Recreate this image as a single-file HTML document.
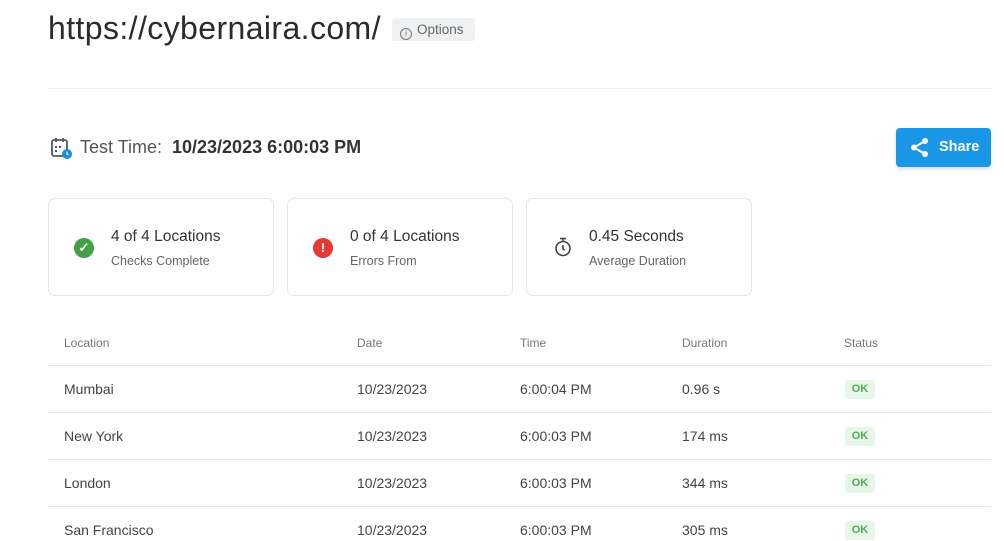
<!DOCTYPE html>
<html><head><meta charset="utf-8"><style>
body{margin:0;width:1004px;height:541px;overflow:hidden;background:#fff;font-family:"Liberation Sans",Arial,sans-serif;color:#333;position:relative}
.a{position:absolute;white-space:nowrap}
.card{position:absolute;top:198px;width:226px;height:98px;border:1px solid #e6e6e6;border-radius:7px;box-sizing:border-box}
.card .t{position:absolute;left:62px;top:29px;font-size:15.5px;color:#333}
.card .s{position:absolute;left:62px;top:55px;font-size:12.5px;color:#666}
.card .ic{position:absolute;left:25px;top:39px;width:20px;height:20px;border-radius:50%;color:#fff;font-size:13px;font-weight:bold;text-align:center;line-height:20px}
.hr{position:absolute;left:48px;width:943px;height:1px;background:#e8e8e8}
.th{position:absolute;top:336px;font-size:12px;color:#777}
.td{position:absolute;font-size:14px;color:#444}
.ok{position:absolute;left:845px;width:30px;height:19px;background:#e8f5e9;color:#4caf50;font-size:11px;font-weight:bold;text-align:center;line-height:19px;border-radius:3px}
</style></head><body>
<div class="a" style="left:48px;top:10px;font-size:32px;color:#2b2b2b;letter-spacing:0.4px">https://cybernaira.com/</div>
<div class="a" style="left:392px;top:18px;width:83px;height:23px;background:#eef0f2;border-radius:3px;font-size:13.5px;color:#666;line-height:23px"><span style="display:inline-block;box-sizing:border-box;width:12px;height:12px;border:1.3px solid #777;border-radius:50%;margin:0 5px 0 8px;vertical-align:-2px;font-size:8px;line-height:10px;text-align:center">i</span>Options</div>
<div class="hr" style="top:88px;background:#eee"></div>
<svg class="a" style="left:51px;top:137px" width="22" height="22" viewBox="0 0 22 22"><rect x="1" y="3" width="15" height="16" rx="2" fill="none" stroke="#556" stroke-width="1.8"/><line x1="5" y1="1" x2="5" y2="5" stroke="#556" stroke-width="1.8"/><line x1="12" y1="1" x2="12" y2="5" stroke="#556" stroke-width="1.8"/><rect x="4" y="9" width="2" height="2" fill="#556"/><rect x="8" y="9" width="2" height="2" fill="#556"/><rect x="4" y="13" width="2" height="2" fill="#556"/><circle cx="16" cy="17" r="5" fill="#1e88e5"/><path d="M16 14.5v2.5l1.5 1" stroke="#fff" stroke-width="1.2" fill="none"/></svg>
<div class="a" style="left:80px;top:137px;font-size:18px;color:#555">Test Time:</div>
<div class="a" style="left:172px;top:137px;font-size:18px;font-weight:bold;color:#333">10/23/2023 6:00:03 PM</div>
<div class="a" style="left:896px;top:128px;width:95px;height:39px;background:#1a96e6;border-radius:4px;box-shadow:0 2px 3px rgba(0,0,0,.15);color:#fff;font-weight:bold;font-size:14.5px">
<svg style="position:absolute;left:14px;top:9px" width="20" height="21" viewBox="0 0 20 21"><circle cx="15" cy="4" r="3" fill="#fff"/><circle cx="4" cy="10.5" r="3" fill="#fff"/><circle cx="15" cy="17" r="3" fill="#fff"/><path d="M15 4L4 10.5L15 17" stroke="#fff" stroke-width="2" fill="none"/></svg><span style="position:absolute;left:43px;top:11px">Share</span></div>
<div class="card" style="left:48px"><div class="ic" style="background:#43a047">✓</div><div class="t">4 of 4 Locations</div><div class="s">Checks Complete</div></div>
<div class="card" style="left:287px"><div class="ic" style="background:#e53935">!</div><div class="t">0 of 4 Locations</div><div class="s">Errors From</div></div>
<div class="card" style="left:526px"><svg style="position:absolute;left:27px;top:38px" width="18" height="20" viewBox="0 0 18 20"><circle cx="9" cy="11.5" r="7" fill="none" stroke="#444" stroke-width="1.6"/><line x1="6" y1="1.5" x2="12" y2="1.5" stroke="#444" stroke-width="1.6"/><line x1="9" y1="2" x2="9" y2="4.5" stroke="#444" stroke-width="1.6"/><path d="M9 8v4l2 1" stroke="#444" stroke-width="1.6" fill="none"/></svg><div class="t">0.45 Seconds</div><div class="s">Average Duration</div></div>
<div class="th" style="left:64px">Location</div><div class="th" style="left:357px">Date</div><div class="th" style="left:520px">Time</div><div class="th" style="left:682px">Duration</div><div class="th" style="left:844px">Status</div>
<div class="hr" style="top:365px"></div>
<div class="td" style="left:64px;top:381px">Mumbai</div><div class="td" style="left:357px;top:381px">10/23/2023</div><div class="td" style="left:520px;top:381px">6:00:04 PM</div><div class="td" style="left:682px;top:381px">0.96 s</div><div class="ok" style="top:380px">OK</div>
<div class="hr" style="top:412px"></div>
<div class="td" style="left:64px;top:428px">New York</div><div class="td" style="left:357px;top:428px">10/23/2023</div><div class="td" style="left:520px;top:428px">6:00:03 PM</div><div class="td" style="left:682px;top:428px">174 ms</div><div class="ok" style="top:427px">OK</div>
<div class="hr" style="top:459px"></div>
<div class="td" style="left:64px;top:475px">London</div><div class="td" style="left:357px;top:475px">10/23/2023</div><div class="td" style="left:520px;top:475px">6:00:03 PM</div><div class="td" style="left:682px;top:475px">344 ms</div><div class="ok" style="top:474px">OK</div>
<div class="hr" style="top:506px"></div>
<div class="td" style="left:64px;top:522px">San Francisco</div><div class="td" style="left:357px;top:522px">10/23/2023</div><div class="td" style="left:520px;top:522px">6:00:03 PM</div><div class="td" style="left:682px;top:522px">305 ms</div><div class="ok" style="top:521px">OK</div>
</body></html>
